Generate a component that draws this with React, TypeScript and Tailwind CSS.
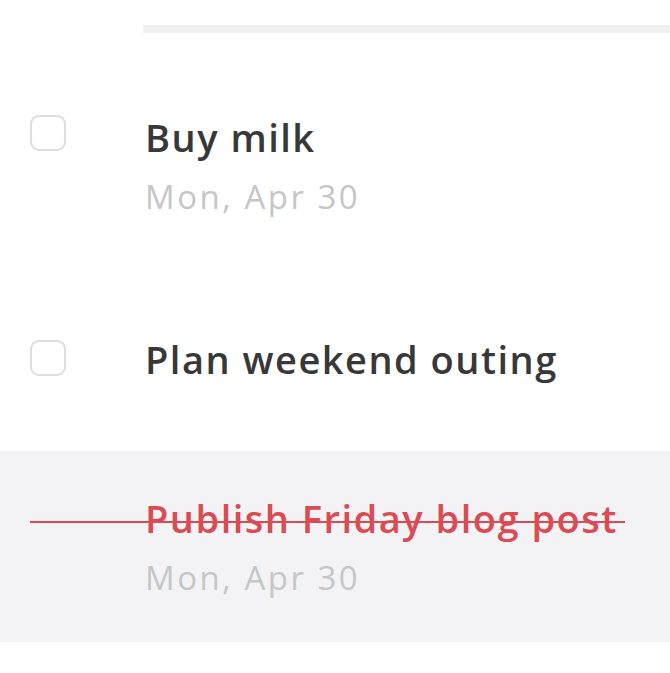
const tasks = [
  { title: "Buy milk", date: "Mon, Apr 30", done: false },
  { title: "Plan weekend outing", date: "", done: false },
  { title: "Publish Friday blog post", date: "Mon, Apr 30", done: true },
];

const Checkbox = () => (
  <div className="w-[36px] h-[36px] shrink-0 rounded-[9px] border-2 border-[#dedede] bg-white" />
);

const TaskText = ({ title, date, done }: { title: string; date: string; done: boolean }) => (
  <div className="flex flex-col">
    <span
      className={`text-[38px] leading-[46px] tracking-[1.5px] font-semibold whitespace-nowrap ${done ? "text-[#db4b53]" : "text-[#383838]"}`}
    >
      {title}
    </span>
    {date && (
      <span className="mt-[18px] text-[33px] leading-[38px] tracking-[2.5px] font-medium text-[#c6c6c6] whitespace-nowrap">
        {date}
      </span>
    )}
  </div>
);

export default function App() {
  const [first, second, third] = tasks;

  return (
    <div className="w-[670px] h-[673px] bg-white overflow-hidden font-['Open_Sans',sans-serif]">
      <div className="mt-[25px] ml-[143px] h-[8px] bg-[#f1f1f1]" />

      <div className="flex items-start pl-[30px] pt-[81px]">
        <div className="mt-px">
          <Checkbox />
        </div>
        <div className="ml-[79px]">
          <TaskText {...first} />
        </div>
      </div>

      <div className="flex items-start pl-[30px] mt-[120px]">
        <div className="mt-[4px]">
          <Checkbox />
        </div>
        <div className="ml-[79px]">
          <TaskText {...second} />
        </div>
      </div>

      <div className="relative mt-[69px] bg-[#f3f3f6] pt-[44px] pb-[45px] pl-[145px]">
        <TaskText {...third} />
        <div className="absolute left-[30px] right-[45px] top-[70px] h-[2px] bg-[#db4b53]" />
      </div>
    </div>
  );
}
